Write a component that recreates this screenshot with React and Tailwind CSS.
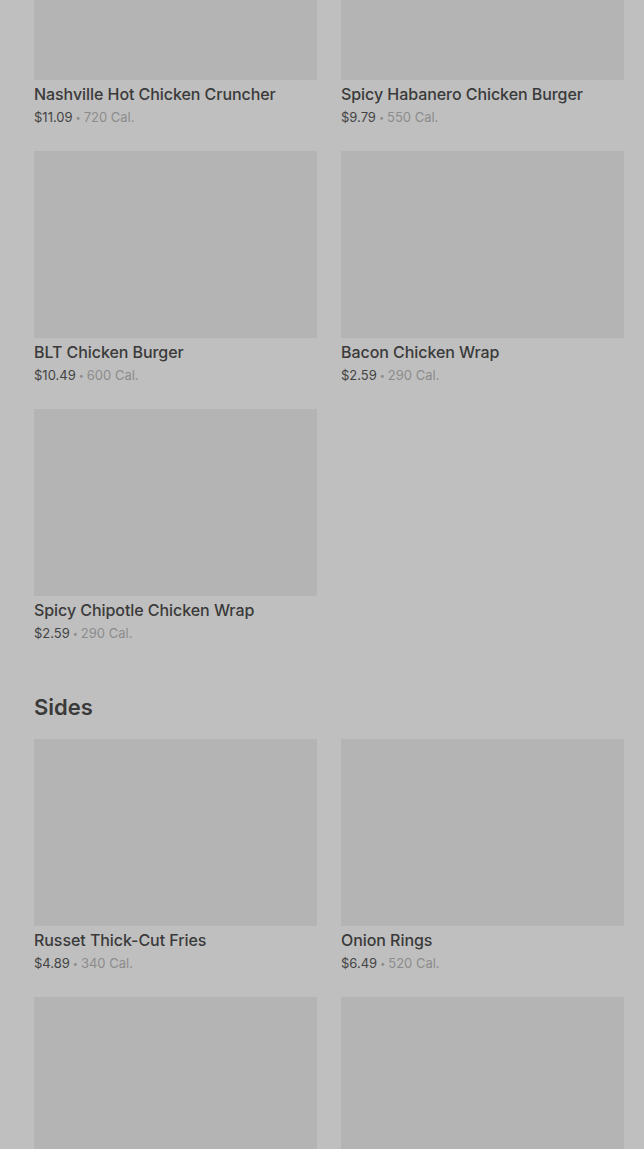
import React from "react";

const mains = [
  { name: "Nashville Hot Chicken Cruncher", price: "$11.09", cal: "720 Cal." },
  { name: "Spicy Habanero Chicken Burger", price: "$9.79", cal: "550 Cal." },
  { name: "BLT Chicken Burger", price: "$10.49", cal: "600 Cal." },
  { name: "Bacon Chicken Wrap", price: "$2.59", cal: "290 Cal." },
  { name: "Spicy Chipotle Chicken Wrap", price: "$2.59", cal: "290 Cal." },
];

// last row is cut off by the viewport, only the photos show
const sides = [
  { name: "Russet Thick-Cut Fries", price: "$4.89", cal: "340 Cal." },
  { name: "Onion Rings", price: "$6.49", cal: "520 Cal." },
  { name: null },
  { name: null },
];

const ItemCard = ({ item }) => (
  <div className="flex flex-col">
    <div className="h-[187px] w-full bg-[#b4b4b4]" />
    {item.name && (
      <>
        <div className="mt-[4px] text-[16px] leading-[20px] font-medium text-[#3a3a3a] tracking-[-0.06px]">
          {item.name}
        </div>
        <div className="mt-[5px] h-[16px] flex items-center text-[13px] leading-[16px] text-[#8c8c8c]">
          <span className="text-[#444444]">{item.price}</span>
          <span className="mx-[3px] text-[9px] leading-none">•</span>
          <span>{item.cal}</span>
        </div>
      </>
    )}
  </div>
);

const App = () => {
  return (
    <div
      className="h-[1149px] overflow-hidden bg-[#bfbfbf]"
      style={{ fontFamily: "Inter, 'Noto Sans', sans-serif" }}
    >
      <div className="-mt-[107px] pl-[34px] pr-[20px]">
        <div className="grid grid-cols-2 gap-x-[24px] gap-y-[26px]">
          {mains.map((item) => (
            <ItemCard key={item.name} item={item} />
          ))}
        </div>

        <h2 className="mt-[52px] mb-[18px] text-[22px] leading-[28px] font-semibold text-[#3a3a3a]">
          Sides
        </h2>

        <div className="grid grid-cols-2 gap-x-[24px] gap-y-[26px]">
          {sides.map((item, i) => (
            <ItemCard key={i} item={item} />
          ))}
        </div>
      </div>
    </div>
  );
};

export default App;
